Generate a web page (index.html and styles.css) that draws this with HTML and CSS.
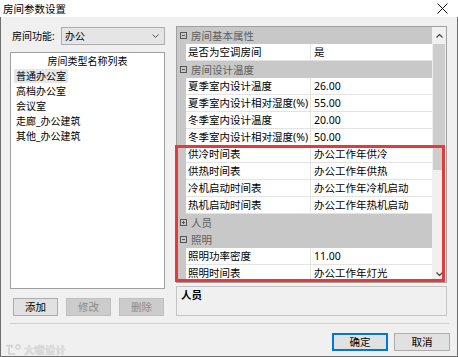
FILE: index.html
```html
<!DOCTYPE html>
<html lang="zh-CN">
<head>
    <meta charset="UTF-8">
    <title>房间参数设置</title>
    <link rel="stylesheet" href="styles.css">
</head>
<body>
    <div class="window">
        <div class="titlebar">
            <span class="title">房间参数设置</span>
            <svg class="close" width="11" height="11" viewBox="0 0 11 11">
                <path d="M0.5 0.5 L10.5 10.5 M10.5 0.5 L0.5 10.5" stroke="#111" stroke-width="1"/>
            </svg>
        </div>

        <div class="client">
            <div class="main">
                <div class="left">
                    <div class="func-row">
                        <label class="func-label">房间功能:</label>
                        <div class="combo">
                            <span>办公</span>
                            <svg class="combo-arrow" width="7" height="4" viewBox="0 0 7 4">
                                <path d="M0.5 0.5 L3.5 3.5 L6.5 0.5" fill="none" stroke="#555" stroke-width="1"/>
                            </svg>
                        </div>
                    </div>

                    <div class="listbox">
                        <div class="list-head">房间类型名称列表</div>
                        <div class="list-item"><span class="selected">普通办公室</span></div>
                        <div class="list-item"><span>高档办公室</span></div>
                        <div class="list-item"><span>会议室</span></div>
                        <div class="list-item"><span>走廊_办公建筑</span></div>
                        <div class="list-item"><span>其他_办公建筑</span></div>
                    </div>

                    <div class="left-buttons">
                        <button class="btn">添加</button>
                        <button class="btn" disabled>修改</button>
                        <button class="btn" disabled>删除</button>
                    </div>
                </div>

                <div class="right">
                    <div class="propgrid">
                        <div class="rows">
                            <div class="cat-row">
                                <svg class="toggle" width="7" height="7" viewBox="0 0 7 7"><rect x="0.5" y="0.5" width="6" height="6" fill="none" stroke="#555"/><path d="M2 3.5 H5" stroke="#555"/></svg>
                                <span>房间基本属性</span>
                            </div>
                            <div class="prop-row"><div class="name">是否为空调房间</div><div class="value">是</div></div>
                            <div class="cat-row">
                                <svg class="toggle" width="7" height="7" viewBox="0 0 7 7"><rect x="0.5" y="0.5" width="6" height="6" fill="none" stroke="#555"/><path d="M2 3.5 H5" stroke="#555"/></svg>
                                <span>房间设计温度</span>
                            </div>
                            <div class="prop-row"><div class="name">夏季室内设计温度</div><div class="value">26.00</div></div>
                            <div class="prop-row"><div class="name">夏季室内设计相对湿度(%)</div><div class="value">55.00</div></div>
                            <div class="prop-row"><div class="name">冬季室内设计温度</div><div class="value">20.00</div></div>
                            <div class="prop-row"><div class="name">冬季室内设计相对湿度(%)</div><div class="value">50.00</div></div>
                            <div class="prop-row"><div class="name">供冷时间表</div><div class="value">办公工作年供冷</div></div>
                            <div class="prop-row"><div class="name">供热时间表</div><div class="value">办公工作年供热</div></div>
                            <div class="prop-row"><div class="name">冷机启动时间表</div><div class="value">办公工作年冷机启动</div></div>
                            <div class="prop-row"><div class="name">热机启动时间表</div><div class="value">办公工作年热机启动</div></div>
                            <div class="cat-row">
                                <svg class="toggle" width="7" height="7" viewBox="0 0 7 7"><rect x="0.5" y="0.5" width="6" height="6" fill="none" stroke="#555"/><path d="M2 3.5 H5 M3.5 2 V5" stroke="#555"/></svg>
                                <span>人员</span>
                            </div>
                            <div class="cat-row">
                                <svg class="toggle" width="7" height="7" viewBox="0 0 7 7"><rect x="0.5" y="0.5" width="6" height="6" fill="none" stroke="#555"/><path d="M2 3.5 H5" stroke="#555"/></svg>
                                <span>照明</span>
                            </div>
                            <div class="prop-row"><div class="name">照明功率密度</div><div class="value">11.00</div></div>
                            <div class="prop-row"><div class="name">照明时间表</div><div class="value">办公工作年灯光</div></div>
                        </div>

                        <div class="scrollbar">
                            <div class="sb-btn">
                                <svg width="7" height="4" viewBox="0 0 7 4"><path d="M0.5 3.5 L3.5 0.5 L6.5 3.5" fill="none" stroke="#444" stroke-width="1.2"/></svg>
                            </div>
                            <div class="sb-thumb"></div>
                            <div class="sb-track"></div>
                            <div class="sb-btn">
                                <svg width="7" height="4" viewBox="0 0 7 4"><path d="M0.5 0.5 L3.5 3.5 L6.5 0.5" fill="none" stroke="#444" stroke-width="1.2"/></svg>
                            </div>
                        </div>

                        <div class="highlight-box"></div>
                    </div>

                    <div class="desc">
                        <b>人员</b>
                    </div>
                </div>
            </div>

            <div class="separator"></div>

            <div class="footer">
                <div class="watermark">
                    <svg width="17" height="12" viewBox="0 0 17 12">
                        <path d="M1.5 1.5 H7 V4 M4 1.5 V10 H10" fill="none" stroke="#cfcfcf" stroke-width="1.6"/>
                        <circle cx="13" cy="3" r="2.2" fill="none" stroke="#cfcfcf" stroke-width="1.2"/>
                    </svg>
                    <span>大暖设计</span>
                </div>
                <button class="btn primary">确定</button>
                <button class="btn">取消</button>
            </div>
        </div>
    </div>
</body>
</html>
```

FILE: styles.css
```css
* {
    margin: 0;
    padding: 0;
    box-sizing: border-box;
}

body {
    font-family: "Noto Sans", "Noto Sans CJK SC", sans-serif;
    font-size: 10.5px;
    color: #000;
    background: #fff;
}

.window {
    width: 458px;
    height: 357px;
    display: flex;
    flex-direction: column;
}

.titlebar {
    height: 22px;
    background: #fff;
    display: flex;
    align-items: center;
    justify-content: space-between;
    padding: 0 10px 0 3px;
}

.title {
    font-size: 10.5px;
    line-height: 14px;
}

.client {
    flex: 1;
    background: #f0f0f0;
    border: 1px solid #6e6e6e;
    border-top: none;
    display: flex;
    flex-direction: column;
}

.main {
    display: flex;
    padding-left: 9px;
}

/* left column */
.left {
    width: 155px;
    display: flex;
    flex-direction: column;
}

.func-row {
    display: flex;
    align-items: center;
    height: 18px;
    margin-top: 10px;
}

.func-label {
    width: 53px;
    padding-left: 2px;
    font-size: 10px;
    line-height: 14px;
}

.combo {
    width: 104px;
    height: 18px;
    flex-shrink: 0;
    background: #e5e5e5;
    border: 1px solid #adadad;
    display: flex;
    align-items: center;
    justify-content: space-between;
    padding: 0 5px 0 3px;
    font-size: 10px;
    line-height: 14px;
}

.listbox {
    height: 237px;
    margin-top: 7px;
    background: #fff;
    border: 1px solid #a0a0a0;
    padding-top: 1px;
    font-size: 10px;
}

.list-head {
    text-align: center;
    line-height: 15px;
}

.list-item {
    line-height: 15px;
    padding-left: 3px;
}

.list-item span {
    padding: 0 2px;
}

.list-item .selected {
    background: #e6e6e6;
}

.left-buttons {
    display: flex;
    gap: 8px;
    margin-top: 9px;
    padding-left: 3px;
}

.left-buttons .btn {
    width: 45px;
}

/* buttons */
.btn {
    height: 18px;
    background: #e1e1e1;
    border: 1px solid #adadad;
    font-family: inherit;
    font-size: 10.5px;
    line-height: 14px;
    color: #000;
}

.btn:disabled {
    background: #cccccc;
    border-color: #bfbfbf;
    color: #8a8a8a;
}

.btn.primary {
    border: 1px solid #0078d7;
    box-shadow: inset 0 0 0 1px #0078d7;
}

/* property grid */
.right {
    width: 271px;
    margin-left: 11px;
    display: flex;
    flex-direction: column;
}

.propgrid {
    position: relative;
    height: 257px;
    margin-top: 9px;
    border: 1px solid #a0a0a0;
    display: flex;
}

.rows {
    width: 255px;
    display: flex;
    flex-direction: column;
    background: #c8c8c8;
}

.cat-row {
    height: 17px;
    display: flex;
    align-items: center;
    gap: 4px;
    padding-left: 3px;
    color: #5e5e5e;
    line-height: 14px;
    background: #c8c8c8;
}

.toggle {
    flex-shrink: 0;
}

.prop-row {
    height: 17px;
    display: flex;
    padding-left: 9px;
}

.prop-row .name,
.prop-row .value {
    background: #fff;
    border-bottom: 1px solid #e3e3e3;
    padding-left: 2px;
    line-height: 16px;
    white-space: nowrap;
    overflow: hidden;
}

.prop-row .name {
    width: 125px;
    border-right: 1px solid #e3e3e3;
}

.prop-row .value {
    flex: 1;
    padding-left: 3px;
}

.scrollbar {
    width: 14px;
    display: flex;
    flex-direction: column;
    background: #f0f0f0;
}

.sb-btn {
    height: 17px;
    display: flex;
    align-items: center;
    justify-content: center;
}

.sb-thumb {
    height: 126px;
    background: #cdcdcd;
    margin: 0 1px;
}

.sb-track {
    flex: 1;
}

.highlight-box {
    position: absolute;
    left: -2px;
    top: 118px;
    width: 270px;
    height: 137px;
    border: 3px solid #e53a3a;
}

.desc {
    height: 30px;
    margin-top: 3px;
    border: 1px solid #c4c4c4;
    background: #f0f0f0;
    padding: 1px 4px;
    line-height: 14px;
}

.desc b {
    font-weight: 700;
}

.separator {
    height: 1px;
    margin: 7px 8px 0 9px;
    background: #d0d0d0;
}

.footer {
    display: flex;
    align-items: center;
    gap: 6px;
    margin-top: 4px;
    padding: 0 7px 0 4px;
}

.footer .btn {
    width: 56px;
}

.watermark {
    margin-right: auto;
    margin-top: 16px;
    display: flex;
    align-items: center;
    gap: 2px;
    color: #e8e8e8;
    font-size: 10.5px;
    line-height: 12px;
    text-shadow: 0 0 1px #8f8f8f;
}
```
